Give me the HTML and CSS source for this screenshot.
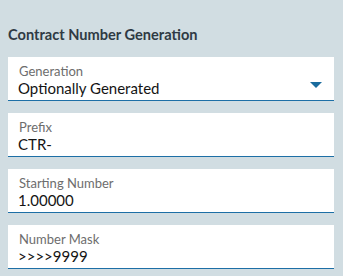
FILE: index.html
```html
<!DOCTYPE html>
<html>
<head>
<meta charset="utf-8">
<link rel="stylesheet" href="styles.css">
</head>
<body>
<div class="panel">
  <h2 class="title">Contract Number Generation</h2>
  <div class="fields">
    <div class="field select">
      <div class="texts">
        <div class="label">Generation</div>
        <div class="value">Optionally Generated</div>
      </div>
      <svg class="caret" width="12" height="6" viewBox="0 0 12 6"><path d="M0 0H12L6 6Z" fill="#1a6c9e"/></svg>
    </div>
    <div class="field">
      <div class="texts">
        <div class="label">Prefix</div>
        <div class="value">CTR-</div>
      </div>
    </div>
    <div class="field">
      <div class="texts">
        <div class="label">Starting Number</div>
        <div class="value">1.00000</div>
      </div>
    </div>
    <div class="field">
      <div class="texts">
        <div class="label">Number Mask</div>
        <div class="value">&gt;&gt;&gt;&gt;9999</div>
      </div>
    </div>
  </div>
</div>
</body>
</html>
```
FILE: styles.css
```css
html, body {
  margin: 0;
  padding: 0;
  background: #d1dde2;
}
body {
  width: 343px;
  height: 276px;
  overflow: hidden;
  font-family: Lato, "Liberation Sans", sans-serif;
}
.panel {
  padding: 25px 9px 0 8px;
}
.title {
  margin: 0 0 12px 0;
  font-size: 14.6px;
  font-weight: 700;
  color: #2f3a44;
  line-height: 20px;
}
.fields {
  display: flex;
  flex-direction: column;
  gap: 12px;
}
.field {
  background: #fff;
  border-bottom: 1px solid #1d6fa6;
  height: 44px;
  box-sizing: border-box;
  padding: 6px 12px 0 10px;
  display: flex;
  align-items: flex-start;
  justify-content: space-between;
}
.label {
  font-size: 13px;
  line-height: 16px;
  color: #6d6d6d;
  padding-left: 1px;
}
.value {
  font-size: 15px;
  line-height: 18px;
  color: #141414;
}
.caret {
  margin-top: 19px;
}
```
